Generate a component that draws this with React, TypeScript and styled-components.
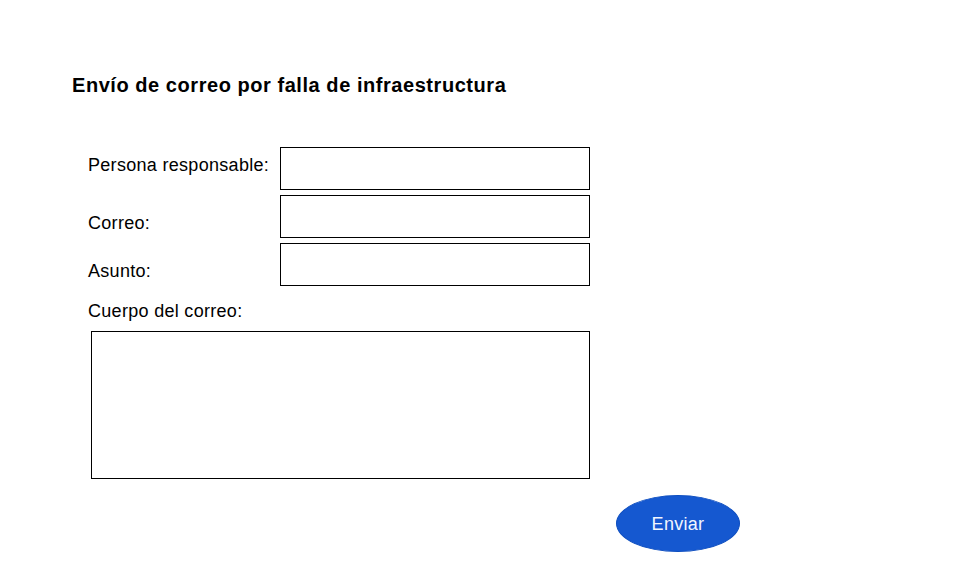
import React from "react";
import styled, { createGlobalStyle } from "styled-components";

const Global = createGlobalStyle`
  html, body { margin: 0; padding: 0; background: #ffffff; }
  body { font-family: Arial, "Liberation Sans", Helvetica, sans-serif; color: #000; }
`;

const Page = styled.div`
  width: 960px;
  height: 588px;
  box-sizing: border-box;
  padding: 73px 0 0 72px;
  background: #fff;
`;

const Title = styled.h1`
  margin: 0;
  font-size: 20px;
  line-height: 24px;
  letter-spacing: 0.55px;
  font-weight: 700;
`;

const Form = styled.form`
  margin: 50px 0 0 16px;
  display: flex;
  flex-direction: column;
`;

const Fields = styled.div`
  display: grid;
  grid-template-columns: 192px 310px;
  row-gap: 5px;
`;

const Label = styled.label<{ $offset: number }>`
  font-size: 18px;
  line-height: 20px;
  letter-spacing: 0.3px;
  padding-top: ${(p) => p.$offset}px;
  white-space: nowrap;
`;

const Input = styled.input`
  box-sizing: border-box;
  width: 310px;
  height: 43px;
  margin: 0;
  border: 1px solid #000;
  border-radius: 0;
  outline: none;
  background: #fff;
`;

const BodyLabel = styled.label`
  display: block;
  margin-top: 15px;
  font-size: 18px;
  line-height: 20px;
  letter-spacing: 0.3px;
`;

const TextArea = styled.textarea`
  box-sizing: border-box;
  display: block;
  width: 499px;
  height: 148px;
  margin: 10px 0 0 3px;
  border: 1px solid #000;
  border-radius: 0;
  resize: none;
  outline: none;
  background: #fff;
`;

const Footer = styled.div`
  display: flex;
  margin-top: 16px;
  padding-left: 528px;
`;

const SendButton = styled.button`
  box-sizing: border-box;
  width: 124px;
  height: 57px;
  border-radius: 50%;
  border: 1px solid #0f4fc0;
  background: #1558d0;
  color: #f2f6ff;
  font-family: Arial, "Liberation Sans", Helvetica, sans-serif;
  font-size: 18px;
  letter-spacing: 0.3px;
  padding: 2px 0 0;
  cursor: pointer;
`;

const fields = [
  { label: "Persona responsable:", offset: 8 },
  { label: "Correo:", offset: 18 },
  { label: "Asunto:", offset: 18 },
];

export default function App() {
  return (
    <>
      <Global />
      <Page>
        <Title>Envío de correo por falla de infraestructura</Title>
        <Form onSubmit={(e) => e.preventDefault()}>
          <Fields>
            {fields.map((f) => (
              <React.Fragment key={f.label}>
                <Label $offset={f.offset}>{f.label}</Label>
                <Input type="text" />
              </React.Fragment>
            ))}
          </Fields>
          <BodyLabel>Cuerpo del correo:</BodyLabel>
          <TextArea />
          <Footer>
            <SendButton type="submit">Enviar</SendButton>
          </Footer>
        </Form>
      </Page>
    </>
  );
}
